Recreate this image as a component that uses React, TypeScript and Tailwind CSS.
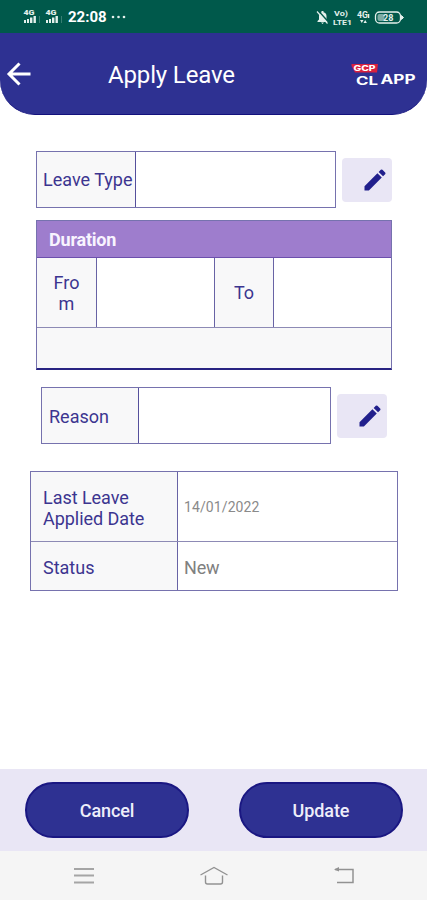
import type { ReactNode } from "react";

const labelText = "text-[18px] leading-[21px] text-[#3c3590]";

function Signal() {
  return (
    <svg width="18" height="17" viewBox="0 0 18 17" fill="#e3f0ec">
      <text x="0.5" y="6.5" fontFamily="Roboto, sans-serif" fontSize="7.5" fontWeight="900" textLength="11" lengthAdjust="spacingAndGlyphs">
        4G
      </text>
      <rect x="1" y="12" width="2" height="3" />
      <rect x="4" y="11" width="2" height="4" />
      <rect x="7" y="9.5" width="2.4" height="5.5" />
      <rect x="10.5" y="8" width="2.4" height="7" />
      <rect x="16" y="8" width="1" height="7" opacity="0.25" />
    </svg>
  );
}

function StatusBar() {
  return (
    <div className="flex h-[33px] shrink-0 items-center bg-[#00594b] pl-[23px] text-white">
      <div className="flex w-[45px] gap-[4px]">
        <Signal />
        <Signal />
      </div>
      <span className="w-[43px] pt-[2px] text-[15px] font-bold leading-none">22:08</span>
      <svg width="16" height="4" viewBox="0 0 16 4" fill="#e3f0ec">
        <circle cx="2" cy="2" r="1.3" />
        <circle cx="7.5" cy="2" r="1.3" />
        <circle cx="13" cy="2" r="1.3" />
      </svg>
      <svg className="ml-auto mr-[21px]" width="91" height="20" viewBox="0 0 91 20" fill="#e3f0ec" fontFamily="Roboto, sans-serif" fontWeight="700">
        <path d="M4 12.5V9a4 4 0 0 1 2.500-3.700V4h2v1.300A4 4 0 0 1 11.500 9v3.500l1.500 1.500v1H2.500v-1zM6 15.500h3l-1.500 1.500z" />
        <path d="M3.500 4l10 11" stroke="#00594b" strokeWidth="1.5" />
        <path d="M2 4.500l10.500 12" stroke="#e3f0ec" strokeWidth="1.2" />
        <text x="19" y="8.5" fontSize="7" textLength="14" lengthAdjust="spacingAndGlyphs">Vo)</text>
        <text x="18" y="17.5" fontSize="8" textLength="19" lengthAdjust="spacingAndGlyphs">LTE1</text>
        <text x="42" y="11" fontSize="9" textLength="11" lengthAdjust="spacingAndGlyphs">4G</text>
        <path d="M53 7h1.300v4H53zM45 13h3.500l-1.700 3zM48.500 16l1.700-3 1.700 3z" />
        <rect x="60.5" y="5" width="25" height="11" rx="4" fill="none" stroke="#e3f0ec" strokeWidth="1.3" />
        <rect x="62.5" y="7" width="7" height="7" rx="2" opacity="0.55" />
        <path d="M86.500 8.500l2 2-2 2z" stroke="#e3f0ec" />
        <text x="68" y="13.7" fontSize="9">28</text>
      </svg>
    </div>
  );
}

function Logo() {
  return (
    <svg width="66" height="24" viewBox="0 0 66 24" fontFamily="Inter, sans-serif">
      <path d="M0.500 2H27L26 10.500H4L0.500 4Z" fill="#d9213e" />
      <text x="2.5" y="8.5" fontSize="7.5" fontWeight="800" fill="#fff" textLength="22" lengthAdjust="spacingAndGlyphs">GCP</text>
      <text x="5" y="22.5" fontSize="12" fontWeight="700" fill="#fff" textLength="22" lengthAdjust="spacingAndGlyphs">CL</text>
      <text x="29.5" y="22" fontSize="12.5" fontWeight="700" fill="#fff" textLength="35" lengthAdjust="spacingAndGlyphs">APP</text>
    </svg>
  );
}

function Header() {
  return (
    <div className="h-[82px] shrink-0 bg-white">
      <header className="flex h-full items-center rounded-b-[35px] border-b border-[#13117c] bg-[#2e3192] pl-[6px] pr-[10px] text-white">
        <svg width="26" height="26" viewBox="0 0 26 26" fill="none" stroke="#fff" strokeWidth="3">
          <path d="M24.500 13H3.500M13.500 2.500L3 13l10.500 10.500" />
        </svg>
        <h1 className="ml-[76px] pt-[2px] text-[24px] leading-none tracking-[-0.15px]">Apply Leave</h1>
        <div className="ml-auto">
          <Logo />
        </div>
      </header>
    </div>
  );
}

function EditButton() {
  return (
    <button className="flex h-[44px] w-[50px] items-center justify-end rounded-[4px] bg-[#e9e6f5] pr-[3px]">
      <svg width="28" height="28" viewBox="0 0 24 24" fill="#211f8c">
        <path d="M3 17.250V21h3.750L17.810 9.940l-3.750-3.750L3 17.250zM20.710 7.040a1 1 0 0 0 0-1.410l-2.340-2.340a1 1 0 0 0-1.410 0l-1.830 1.830 3.750 3.750 1.830-1.830z" />
      </svg>
    </button>
  );
}

function Field({ label, className, labelClassName }: { label: string; className: string; labelClassName: string }) {
  return (
    <div className={`grid h-[57px] border border-[#7672ae] ${className}`}>
      <div className={`flex items-center whitespace-nowrap border-r border-[#55509c] bg-[#f8f8f9] ${labelText} ${labelClassName}`}>
        {label}
      </div>
      <div />
    </div>
  );
}

function PillButton({ children }: { children: ReactNode }) {
  return (
    <button className="h-[56px] w-[164px] rounded-full border-2 border-[#1a1782] bg-[#2e3192] pt-px text-[18px] font-medium tracking-[-0.1px] text-[#eeeefa]">
      {children}
    </button>
  );
}

export default function App() {
  return (
    <div className="flex h-[900px] w-[427px] flex-col overflow-hidden bg-white font-['Roboto',sans-serif]">
      <StatusBar />
      <Header />

      <main className="flex-1">
        <div className="flex items-center gap-[6px] pl-[36px] pt-[36px]">
          <Field label="Leave Type" className="w-[300px] grid-cols-[99px_1fr]" labelClassName="pl-[6px]" />
          <EditButton />
        </div>

        <section className="ml-[36px] mt-[12px] w-[356px] border border-b-2 border-[#7672ae] border-b-[#292482]">
          <h2 className="h-[37px] border-b border-[#6c4fad] bg-[#9e7dcd] pl-[12px] text-[18px] font-bold leading-[38px] tracking-[-0.2px] text-[#f8f4ff]">
            Duration
          </h2>
          <div className="grid h-[70px] grid-cols-[60px_118px_59px_1fr] border-b border-[#8d8ab5]">
            <div className={`flex items-center justify-center break-all border-r border-[#6863a5] bg-[#f8f8f9] px-[15px] text-center ${labelText}`}>
              From
            </div>
            <div className="border-r border-[#6863a5]" />
            <div className={`flex items-center justify-center border-r border-[#6863a5] bg-[#f8f8f9] ${labelText}`}>To</div>
            <div />
          </div>
          <div className="h-[40px] bg-[#f8f8f9]" />
        </section>

        <div className="flex items-center gap-[6px] pl-[41px] pt-[17px]">
          <Field label="Reason" className="w-[290px] grid-cols-[97px_1fr]" labelClassName="pl-[7px] pt-px" />
          <EditButton />
        </div>

        <section className="ml-[30px] mt-[27px] w-[368px] border border-[#7672ae]">
          <div className="grid h-[70px] grid-cols-[147px_1fr] border-b border-[#8d8ab5]">
            <div className={`flex items-center border-r border-[#6863a5] bg-[#f8f8f9] pl-[12px] pt-[2px] tracking-[-0.05px] ${labelText}`}>
              Last Leave
              <br />
              Applied Date
            </div>
            <div className="flex items-center pl-[6px] pt-[2px] text-[14px] tracking-[0.1px] text-[#8a8a8a]">14/01/2022</div>
          </div>
          <div className="grid h-[48px] grid-cols-[147px_1fr]">
            <div className={`flex items-center border-r border-[#6863a5] bg-[#f8f8f9] pl-[12px] pt-[2px] ${labelText}`}>Status</div>
            <div className="flex items-center pl-[6px] pt-[2px] text-[18px] tracking-[-0.2px] text-[#808080]">New</div>
          </div>
        </section>
      </main>

      <footer className="flex h-[82px] shrink-0 items-center justify-between bg-[#e9e6f5] pl-[25px] pr-[24px]">
        <PillButton>Cancel</PillButton>
        <PillButton>Update</PillButton>
      </footer>

      <nav className="flex h-[49px] shrink-0 items-center justify-between bg-[#f5f5f5] pl-[74px] pr-[72px]">
        <svg width="20" height="18" viewBox="0 0 20 18" stroke="#a5a5a5" strokeWidth="2">
          <path d="M0 2H20M0 8.500H20M0 15.500H20" />
        </svg>
        <svg width="28" height="20" viewBox="0 0 28 20" fill="none" stroke="#929292" strokeWidth="1.4">
          <path d="M0.500 9L14 1.500 27.500 9M5.500 9.500V16Q5.500 18 7.500 18H20.500Q22.500 18 22.500 16V9.500" />
        </svg>
        <svg width="22" height="18" viewBox="0 0 22 18" fill="none" stroke="#929292" strokeWidth="1.5">
          <path d="M2 2.500H20V15.500H4" />
          <path d="M1 2.500L6 0V4.500Z" fill="#929292" stroke="none" />
        </svg>
      </nav>
    </div>
  );
}
